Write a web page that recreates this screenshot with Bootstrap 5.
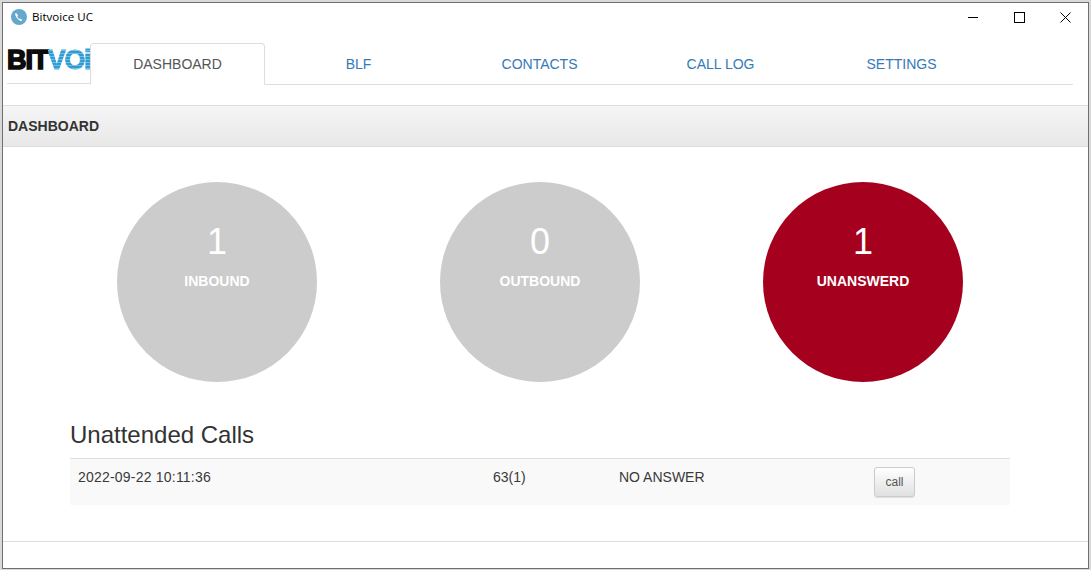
<!DOCTYPE html>
<html lang="en">
<head>
<meta charset="utf-8">
<title>Bitvoice UC</title>
<link href="https://cdn.jsdelivr.net/npm/bootstrap@5.3.0/dist/css/bootstrap.min.css" rel="stylesheet">
<style>
html,body{height:100%;}
body{margin:0;background:#d9d9d9;font-family:"Liberation Sans",Arial,sans-serif;font-size:14px;color:#333;overflow:hidden;padding:2px 2px 1px 2px;}
.win{height:100%;background:#fff;border:1px solid #6f6f6f;display:flex;flex-direction:column;}
.titlebar{height:28px;padding-left:8px;font-family:"Open Sans","Noto Sans",sans-serif;font-size:11.6px;color:#000;flex:none;}
.winbtn{width:46px;height:28px;display:flex;align-items:center;justify-content:center;}
.topnav{height:54px;padding:12px 15px 0 4px;flex:none;}
.logo-clip{width:83px;height:41px;overflow:hidden;border-bottom:1px solid #ddd;white-space:nowrap;font-weight:700;font-size:27px;line-height:32px;flex:none;padding-top:1px;}
.logo-bit{color:#0c0c0c;-webkit-text-stroke:1.6px #0c0c0c;letter-spacing:-.9px;}
.logo-voice{color:transparent;background:repeating-linear-gradient(to bottom,#2f9bd2 0,#2f9bd2 2px,#6fbde3 2px,#6fbde3 3px);-webkit-background-clip:text;background-clip:text;-webkit-text-stroke:1px transparent;letter-spacing:-1.4px;}
.tabs-main{flex:1;border-bottom:1px solid #ddd;flex-wrap:nowrap;}
.tabs-main .nav-item{width:175px;margin-right:6px;margin-bottom:-1px;}
.tabs-main .nav-link{height:42px;line-height:20px;padding:10px 0;text-align:center;font-size:14px;color:#337ab7;border-radius:4px 4px 0 0;border:1px solid transparent;}
.tabs-main .nav-link.active{color:#555;background:#fff;border-color:#ddd #ddd #fff;}
.panelbox{flex:1;margin-top:20px;display:flex;flex-direction:column;}
.panelhead{height:42px;flex:none;border-top:1px solid #ddd;border-bottom:1px solid #ddd;background:linear-gradient(to bottom,#f5f5f5,#e8e8e8);padding:0 5px;font-weight:700;font-size:14px;line-height:41px;color:#333;}
.panelmain{flex:1;padding:35px 67px 0;}
.stat-row{padding-left:47px;gap:123px;}
.stat{width:200px;height:200px;border-radius:50%;background:#ccc;color:#fff;text-align:center;padding-top:38px;}
.stat.alert-red{background:#a5001d;}
.stat-num{font-size:36px;line-height:44px;}
.stat-lbl{font-size:14px;font-weight:700;line-height:20px;margin-top:7px;}
.sec-title{font-size:24px;line-height:26px;font-weight:400;margin:40px 0 10px;color:#333;}
.calls{width:940px;margin:0;border-top:1px solid #ddd;--bs-table-bg:transparent;}
.calls td{background:#f9f9f9;height:45px;padding:8px;line-height:20px;vertical-align:top;border:0;color:#3a3a3a;box-shadow:none;}
.calls .stamp{letter-spacing:.21px;}
.btn-callme{font-size:12px;line-height:18px;padding:5px 10px;height:30px;width:41px;color:#555;border:1px solid #ccc;border-radius:3px;background:linear-gradient(to bottom,#fff,#e0e0e0);box-shadow:0 1px 1px rgba(0,0,0,.1);}
.panelend{flex:none;height:27px;border-top:1px solid #ddd;}
.title-text{margin-left:5px;}
</style>
</head>
<body>
<div class="win">
  <div class="titlebar d-flex align-items-center">
    <svg width="16" height="16" viewBox="0 0 16 16"><circle cx="8" cy="8" r="8" fill="#66a8cc"/><path d="M5 3.700c-.9.600-1 1.700-.4 3 .8 1.800 2.500 4 4.500 5 .9.400 1.700.200 2.300-.5l-2-1.700-.9.600c-.9-.6-1.800-1.800-2.200-2.900l.8-.7z" fill="#fff"/></svg>
    <span class="title-text">Bitvoice UC</span>
    <div class="ms-auto d-flex">
      <div class="winbtn"><svg width="11" height="11" viewBox="0 0 11 11"><path d="M0 5.500h10" stroke="#000"/></svg></div>
      <div class="winbtn"><svg width="11" height="11" viewBox="0 0 11 11"><rect x=".5" y=".5" width="10" height="10" fill="none" stroke="#000"/></svg></div>
      <div class="winbtn"><svg width="11" height="11" viewBox="0 0 11 11"><path d="M.5.500l10 10M10.500.500l-10 10" stroke="#000" fill="none"/></svg></div>
    </div>
  </div>
  <div class="topnav d-flex">
    <div class="logo-clip"><span class="logo-bit">BIT</span><span class="logo-voice">VOiCE</span></div>
    <ul class="nav nav-tabs tabs-main">
      <li class="nav-item"><a class="nav-link active" href="#">DASHBOARD</a></li>
      <li class="nav-item"><a class="nav-link" href="#">BLF</a></li>
      <li class="nav-item"><a class="nav-link" href="#">CONTACTS</a></li>
      <li class="nav-item"><a class="nav-link" href="#">CALL LOG</a></li>
      <li class="nav-item"><a class="nav-link" href="#">SETTINGS</a></li>
    </ul>
  </div>
  <div class="panelbox">
    <div class="panelhead">DASHBOARD</div>
    <div class="panelmain">
      <div class="d-flex stat-row">
        <div class="stat"><div class="stat-num">1</div><div class="stat-lbl">INBOUND</div></div>
        <div class="stat"><div class="stat-num">0</div><div class="stat-lbl">OUTBOUND</div></div>
        <div class="stat alert-red"><div class="stat-num">1</div><div class="stat-lbl">UNANSWERD</div></div>
      </div>
      <h3 class="sec-title">Unattended Calls</h3>
      <table class="table calls">
        <tbody><tr>
          <td class="stamp" style="width:415px">2022-09-22 10:11:36</td>
          <td style="width:126px">63(1)</td>
          <td style="width:255px">NO ANSWER</td>
          <td class="py-2"><button class="btn btn-callme" type="button">call</button></td>
        </tr></tbody>
      </table>
    </div>
    <div class="panelend"></div>
  </div>
</div>
<script src="https://cdn.jsdelivr.net/npm/bootstrap@5.3.0/dist/js/bootstrap.bundle.min.js"></script>
</body>
</html>
